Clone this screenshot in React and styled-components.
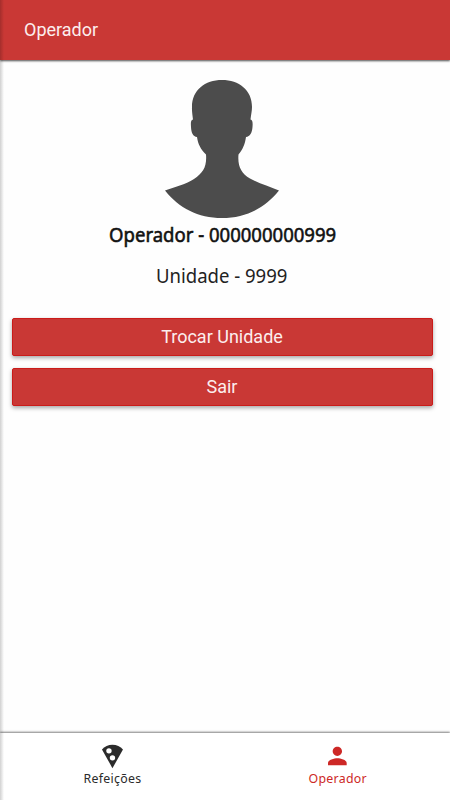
import React, { useState } from 'react';
import styled, { createGlobalStyle } from 'styled-components'

const GlobalStyle = createGlobalStyle`
  * {
    box-sizing: border-box;
  }

  body {
    margin: 0;
    background: #fefefe;
  }
`

const PizzaIcon = () => (
  <svg width="28" height="28" viewBox="0 0 24 24">
    <path fill="currentColor" d="M12.400 2.400C8.830 2.400 5.630 3.800 3.400 6.500L12.400 22.400l9-15.900C19.180 3.800 15.970 2.400 12.400 2.400z" />
    <circle cx="9.400" cy="7.600" r="2.300" fill="#fff" />
    <circle cx="12.400" cy="13.600" r="2.300" fill="#fff" />
  </svg>
)

const PersonIcon = () => (
  <svg width="28" height="28" viewBox="0 0 24 24" fill="currentColor">
    <path d="M12.300 12c2.21 0 4-1.79 4-4s-1.79-4-4-4-4 1.790-4 4 1.790 4 4 4zm0 2c-2.670 0-8 1.340-8 4v2h16v-2c0-2.660-5.330-4-8-4z" />
  </svg>
)

const Silhouette = () => (
  <svg width="116" height="140" viewBox="0 0 116 140" fill="#4c4c4c">
    <path d="M58 1C41 1 28 11 28 28C27.8 32 28.4 36 29 40.5C26.5 41 26.8 44 27 48C27.3 54 29 57.5 33 58C34 65 36.500 70 42 75.500C43 88 39 94 30 100C21 105.500 11 108 1 111.500C15 129 34 139 58 139C82 139 101 129 115 111.500C105 107.500 95 104.500 86 99.500C77 94 73.500 87 74.500 75.500C79 70 81 65 82 58C86 57.500 88 54 88.500 48C88.800 44 88.800 41 86.500 40.500C87 36 88 32 88 28C88 11 75 1 58 1Z" />
  </svg>
)

const tabs = [
  { id: 'refeicoes', label: 'Refeições', icon: PizzaIcon },
  { id: 'operador', label: 'Operador', icon: PersonIcon },
]

export default function App() {
  const [selected, setSelected] = useState('operador')

  return (
    <Page>
      <GlobalStyle />
      <Header>
        <Title>Operador</Title>
      </Header>
      <Content>
        <Silhouette />
        <Name>Operador - 000000000999</Name>
        <Unit>Unidade - 9999</Unit>
        <Actions>
          <Button>Trocar Unidade</Button>
          <Button>Sair</Button>
        </Actions>
      </Content>
      <TabBar>
        {tabs.map(({ id, label, icon: Icon }) => (
          <Tab key={id} $active={selected === id} onClick={() => setSelected(id)}>
            <Icon />
            <TabLabel>{label}</TabLabel>
          </Tab>
        ))}
      </TabBar>
    </Page>
  )
}

const Page = styled.div`
  display: flex;
  flex-direction: column;
  height: 100vh;
  overflow: hidden;
  font-family: 'Noto Sans', sans-serif;
  color: #222;
  position: relative;

  /* shade along the left edge of the page */
  &::after {
    content: '';
    position: absolute;
    inset: 0 auto 0 0;
    width: 4px;
    background: linear-gradient(to right, rgba(0, 0, 0, 0.18), rgba(0, 0, 0, 0));
    pointer-events: none;
  }
`

const Header = styled.header`
  display: flex;
  align-items: center;
  flex: none;
  height: 60px;
  padding: 0 24px;
  background: #c93835;
  box-shadow: 0 1px 2px rgba(0, 0, 0, 0.7);
`

const Title = styled.h1`
  margin: 0;
  color: #fceeee;
  font: 400 18px/24px Roboto, sans-serif;
`

const Content = styled.main`
  display: flex;
  flex: 1;
  flex-direction: column;
  align-items: center;
  padding: 19px 17px 0 12px;

  > svg {
    margin-right: 1px;
  }
`

const Name = styled.h2`
  margin: 2px 0 0;
  font-size: 20.500px;
  font-weight: 400;
  line-height: 26px;
  color: #111;
  white-space: nowrap;
  transform: scaleX(0.904);
  -webkit-text-stroke: 0.6px #111;
`

const Unit = styled.p`
  margin: 15px 1px 0 0;
  font-size: 20.500px;
  line-height: 26px;
  white-space: nowrap;
  transform: scaleX(0.904);
`

const Actions = styled.div`
  display: flex;
  flex-direction: column;
  align-self: stretch;
  gap: 12px;
  margin-top: 30px;
`

const Button = styled.button`
  height: 38px;
  padding: 0 1px 0 0;
  border: 1px solid #cb1b19;
  border-radius: 2px;
  background: #c93835;
  box-shadow: 0 2px 4px rgba(0, 0, 0, 0.35);
  color: #fceeee;
  font: 400 18px/24px Roboto, sans-serif;
`

const TabBar = styled.nav`
  display: flex;
  flex: none;
  height: 67px;
  background: #fff;
  box-shadow: 0 -1px 2px rgba(0, 0, 0, 0.5);
`

const Tab = styled.button`
  display: flex;
  flex: 1;
  flex-direction: column;
  align-items: center;
  padding: 9px 0 0;
  border: 0;
  background: none;
  font-family: inherit;
  color: ${({ $active }) => ($active ? '#cd2826' : '#2b2b2b')};

  > svg {
    margin-right: 1px;
  }
`

const TabLabel = styled.span`
  margin-top: -1px;
  font-size: 13px;
  line-height: 18px;
  letter-spacing: 0.3px;
  transform: scaleX(0.95);
`
